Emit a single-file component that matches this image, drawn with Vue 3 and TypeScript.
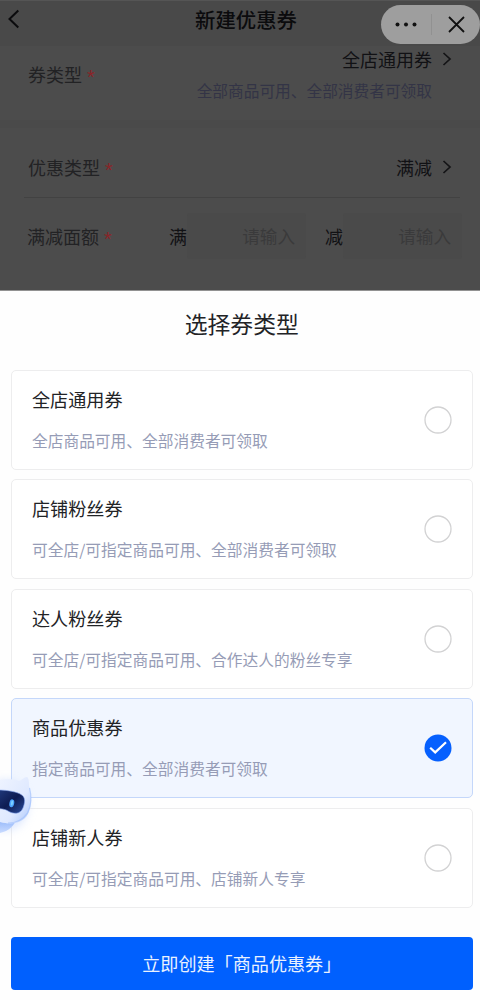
<script setup lang="ts">
import { ref, computed } from 'vue'

interface CouponType {
  name: string
  desc: string
}

const types: CouponType[] = [
  { name: '全店通用券', desc: '全店商品可用、全部消费者可领取' },
  { name: '店铺粉丝券', desc: '可全店/可指定商品可用、全部消费者可领取' },
  { name: '达人粉丝券', desc: '可全店/可指定商品可用、合作达人的粉丝专享' },
  { name: '商品优惠券', desc: '指定商品可用、全部消费者可领取' },
  { name: '店铺新人券', desc: '可全店/可指定商品可用、店铺新人专享' },
]
const selected = ref(3)
const selectedName = computed(() => types[selected.value].name)
</script>

<template>
  <div class="page">
    <div class="form">
      <header class="nav">
        <svg class="back" width="14" height="20" viewBox="0 0 14 20"><path d="M12.3 1.5 3.5 10l8.8 8.5" /></svg>
        <h1>新建优惠券</h1>
      </header>
      <section class="block">
        <div class="label">券类型<i>*</i></div>
        <div class="value-col">
          <div class="value">全店通用券<svg class="arrow" width="10" height="14" viewBox="0 0 10 14"><path d="m1.5 1 6.5 6-6.5 6" /></svg></div>
          <p>全部商品可用、全部消费者可领取</p>
        </div>
      </section>
      <section class="lower">
        <div class="row">
          <div class="label">优惠类型<i>*</i></div>
          <div class="value">满减<svg class="arrow" width="10" height="14" viewBox="0 0 10 14"><path d="m1.5 1 6.5 6-6.5 6" /></svg></div>
        </div>
        <div class="amounts">
          <div class="label">满减面额<i>*</i></div>
          <span class="unit">满</span>
          <div class="field">请输入</div>
          <span class="unit second">减</span>
          <div class="field">请输入</div>
        </div>
      </section>
      <div class="capsule">
        <svg width="100" height="39" viewBox="0 0 100 39">
          <circle cx="16.5" cy="19.5" r="2" /><circle cx="25" cy="19.5" r="2" /><circle cx="33.5" cy="19.5" r="2" />
          <path class="divider" d="M50.5 9v21" />
          <path class="close" d="m68 12 15 15M83 12 68 27" />
        </svg>
      </div>
    </div>

    <main class="sheet">
      <h2>选择券类型</h2>
      <div class="options">
        <div
          v-for="(t, i) in types"
          :key="t.name"
          class="option"
          :class="{ active: i === selected }"
          @click="selected = i"
        >
          <div class="copy">
            <h3>{{ t.name }}</h3>
            <p>{{ t.desc }}</p>
          </div>
          <svg class="radio" width="28" height="28" viewBox="0 0 28 28">
            <template v-if="i === selected">
              <circle cx="14" cy="14" r="13.5" fill="#0660fe" />
              <path d="m6.2 13.8 5 4.6L22 8.3" fill="none" stroke="#fff" stroke-width="2.2" />
            </template>
            <circle v-else cx="14" cy="14" r="13" fill="#fff" stroke="#d2d2d3" stroke-width="1.3" />
          </svg>
        </div>
      </div>
      <button class="submit">立即创建「{{ selectedName }}」</button>
    </main>

    <svg class="robot" width="50" height="94" viewBox="0 0 50 94">
      <defs>
        <linearGradient id="head" x1="0" y1="0" x2="1" y2="1">
          <stop offset="0" stop-color="#eef3ff" /><stop offset=".6" stop-color="#dfe9ff" /><stop offset="1" stop-color="#a9c6fc" />
        </linearGradient>
        <linearGradient id="body" x1="0" y1="0" x2="0" y2="1">
          <stop offset="0" stop-color="#8eb3f9" /><stop offset="1" stop-color="#c9dbff" />
        </linearGradient>
        <linearGradient id="visor" x1="0" y1="0" x2="1" y2="1">
          <stop offset="0" stop-color="#20397c" /><stop offset=".5" stop-color="#0e1c52" /><stop offset="1" stop-color="#294b9c" />
        </linearGradient>
        <filter id="glow" x="-1" y="-1" width="3" height="3"><feGaussianBlur stdDeviation="5" /></filter>
      </defs>
      <ellipse cx="6" cy="45" rx="22" ry="25" fill="#bed2fd" opacity=".55" filter="url(#glow)" />
      <path d="M0 58H17C14 66 9 71 0 73Z" fill="url(#body)" />
      <path d="M0 20C7 19 14 19 19 21C22 20 24 17 27 17C29 18 29 23 29 26C32 34 32 46 28 54C22 64 11 65 0 62Z" fill="url(#head)" />
      <path d="M29.5 28C32 37 31 46 27.5 53C22 61 15 63 8 63" fill="none" stroke="#94b8fb" stroke-width="1.2" opacity=".5" />
      <path d="M-2 30C8 30 17 32 21 34.5C26 37 25 43 23 48C20 55 13 54 8 51C5 49 2 49 -2 48.5Z" fill="url(#visor)" stroke="#8aaaf0" stroke-width=".6" />
      <ellipse cx="11.8" cy="43.3" rx="2.4" ry="4" fill="#4da5ff" transform="rotate(12 11.8 43.3)" />
      <ellipse cx="12" cy="43" rx="1" ry="2.5" fill="#7bd0ff" transform="rotate(12 12 43)" />
    </svg>
  </div>
</template>

<style>
body { margin: 0; background: #fff; }
</style>

<style scoped>
.page {
  position: relative;
  width: 480px;
  height: 1000px;
  overflow: hidden;
  background: #fff;
  font-family: "Noto Sans CJK SC", sans-serif;
  color: #222326;
}
h1, h2, h3, p { margin: 0; font-weight: 400; }
.form {
  position: relative;
  box-sizing: border-box;
  height: 291px;
  background: #4a4a4a;
  border-bottom: 1px solid #929292;
  color: #111114;
}
.nav {
  height: 46px;
  display: flex;
  align-items: flex-start;
  justify-content: space-between;
  background: #494949;
  box-shadow: inset 0 1px #555;
}
.nav h1 { margin-right: 183px; font-size: 20.4px; line-height: 39px; font-weight: 500; color: #0b0b0d; white-space: nowrap; }
.back { margin: 9px 0 0 6px; fill: none; stroke: #0b0b0d; stroke-width: 2; }
.block {
  height: 74px;
  box-sizing: border-box;
  padding: 0 27px 0 28px;
  display: flex;
  justify-content: space-between;
  background: #4c4c4c;
}
.label { display: flex; font-size: 18px; line-height: 26px; color: #222224; white-space: nowrap; }
.label i { font-style: normal; font-family: "Liberation Sans", sans-serif; font-size: 20px; color: #8a2428; margin: 3px 0 -3px 5px; }
.block .label { padding-top: 15px; }
.value { display: flex; align-items: center; justify-content: flex-end; font-size: 18px; line-height: 26px; white-space: nowrap; }
.arrow { margin-left: 10px; margin-right: 1px; fill: none; stroke: #141416; stroke-width: 1.7; }
.value-col p { font-size: 15.7px; line-height: 22px; color: #333446; margin: 8px 21px 0 0; white-space: nowrap; }
.lower { height: 170px; box-sizing: border-box; padding-top: 10px; background: linear-gradient(#4a4a4a 8px, #4c4c4c 8px); }
.row { margin: 0 20px 0 24px; padding: 6px 7px 0 4px; height: 68px; box-sizing: border-box; display: flex; align-items: center; justify-content: space-between; border-bottom: 1px solid #424242; }
.amounts { display: flex; align-items: center; height: 44px; padding: 0 18px 0 27px; margin-top: 16px; }
.amounts .label { width: 142px; }
.unit { font-size: 18px; width: 18px; }
.unit.second { margin-left: 19px; }
.field { width: 119px; height: 46px; box-sizing: border-box; padding-right: 11px; border-radius: 3px; background: #4a4a4a; color: #3a3a3b; font-size: 17.6px; line-height: 46px; text-align: right; }
.capsule { position: absolute; left: 381px; top: 5px; width: 99px; height: 39px; border-radius: 20px; background: #9e9e9e; overflow: hidden; }
.capsule svg { display: block; fill: #111; }
.capsule .divider { stroke: #919191; stroke-width: 1; }
.capsule .close { stroke: #111; stroke-width: 1.8; }
.sheet { height: 709px; box-sizing: border-box; padding: 0 7.5px 0 11px; background: #fefefe; display: flex; flex-direction: column; }
.sheet h2 { height: 78.6px; font-size: 22.8px; line-height: 65px; text-align: center; }
.options { display: flex; flex-direction: column; gap: 9.5px; }
.option {
  height: 100px;
  box-sizing: border-box;
  border: 1px solid #ededee;
  border-radius: 5px;
  background: #fff;
  padding: 0 20px;
  display: flex;
  align-items: center;
  justify-content: space-between;
}
.option.active { background: #f1f6ff; border-color: #c4d7fa; }
.copy { display: flex; flex-direction: column; gap: 18px; padding-bottom: 2px; }
.option h3 { font-size: 18.1px; line-height: 26px; }
.option p { font-size: 15.73px; line-height: 22px; color: #969cb6; white-space: nowrap; }
.submit { margin-top: 29px; height: 53px; flex: none; border: 0; border-radius: 4px; background: #0060fe; color: #eaf2ff; font-family: inherit; font-size: 18.1px; line-height: 52px; padding: 0; text-align: center; }
.robot { position: absolute; left: 0; top: 760px; }
</style>
